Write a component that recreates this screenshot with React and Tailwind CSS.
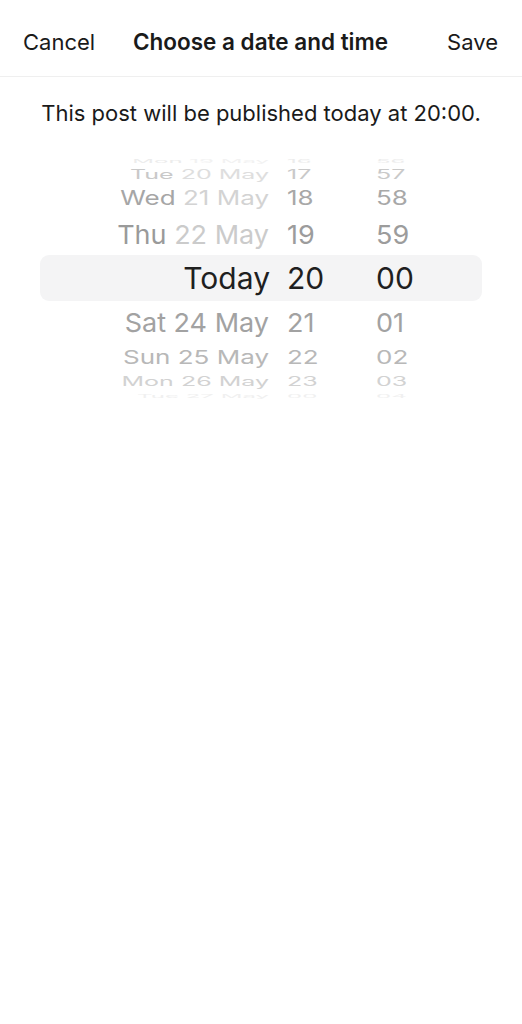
import React from 'react'

const font = { fontFamily: 'Inter, "Noto Sans", sans-serif' }

// wheel rows, top to bottom; the middle one is the chosen value
const rows = [
  { day: 'Mon', date: '19 May', h: '16', m: '56', height: 'h-[11px]', size: 'text-[24px]', scale: 'scale-y-[0.2]', dayColor: 'text-[#ececec]', dateColor: 'text-[#f2f2f2]', numColor: 'text-[#ececec]' },
  { day: 'Tue', date: '20 May', h: '17', m: '57', height: 'h-[17px]', size: 'text-[25px]', scale: 'scale-y-[0.5]', dayColor: 'text-[#c9c9c9]', dateColor: 'text-[#dedede]', numColor: 'text-[#c9c9c9]' },
  { day: 'Wed', date: '21 May', h: '18', m: '58', height: 'h-[30px]', size: 'text-[26px]', scale: 'scale-y-[0.75]', dayColor: 'text-[#a6a6a6]', dateColor: 'text-[#d3d3d3]', numColor: 'text-[#a8a8a8]' },
  { day: 'Thu', date: '22 May', h: '19', m: '59', height: 'h-[42px]', size: 'text-[27px]', scale: 'scale-y-[0.97]', dayColor: 'text-[#9a9a9a]', dateColor: 'text-[#cbcbcb]', numColor: 'text-[#9c9c9c]' },
  { selected: true, day: 'Today', h: '20', m: '00' },
  { day: 'Sat', date: '24 May', h: '21', m: '01', height: 'h-[42px]', size: 'text-[27px]', scale: 'scale-y-[0.97]', dayColor: 'text-[#a2a2a2]', dateColor: 'text-[#a2a2a2]', numColor: 'text-[#a2a2a2]' },
  { day: 'Sun', date: '25 May', h: '22', m: '02', height: 'h-[30px]', size: 'text-[26px]', scale: 'scale-y-[0.72]', dayColor: 'text-[#b8b8b8]', dateColor: 'text-[#b8b8b8]', numColor: 'text-[#b8b8b8]' },
  { day: 'Mon', date: '26 May', h: '23', m: '03', height: 'h-[17px]', size: 'text-[25px]', scale: 'scale-y-[0.5]', dayColor: 'text-[#d2d2d2]', dateColor: 'text-[#d2d2d2]', numColor: 'text-[#d2d2d2]' },
  { day: 'Tue', date: '27 May', h: '00', m: '04', height: 'h-[11px]', size: 'text-[24px]', scale: 'scale-y-[0.2]', dayColor: 'text-[#f0f0f0]', dateColor: 'text-[#f0f0f0]', numColor: 'text-[#f0f0f0]' },
]

function WheelRow({ row }) {
  if (row.selected) {
    return (
      <div className="flex h-[46px] items-center rounded-[9px] bg-[#f4f4f5] text-[30px] leading-none text-[#1f1f1f]">
        <div className="w-[230px] text-right">{row.day}</div>
        <div className="ml-[17px] w-[89px]">{row.h}</div>
        <div>{row.m}</div>
      </div>
    )
  }
  return (
    <div className={`flex items-center overflow-visible leading-none ${row.height} ${row.size}`}>
      <div className={`w-[229px] text-right ${row.scale}`}>
        <span className={row.dayColor}>{row.day}</span>{' '}
        <span className={row.dateColor}>{row.date}</span>
      </div>
      <div className={`ml-[18px] w-[89px] ${row.scale} ${row.numColor}`}>{row.h}</div>
      <div className={`${row.scale} ${row.numColor}`}>{row.m}</div>
    </div>
  )
}

export default function App() {
  return (
    <div className="min-h-[1024px] w-full bg-white" style={font}>
      <div className="grid h-[77px] grid-cols-[1fr_auto_1fr] items-center border-b border-[#efefef] pl-[23px] pr-[24px] pt-[8px] text-[22px] text-[#1a1a1a]">
        <button className="justify-self-start">Cancel</button>
        <h1 className="text-[22.5px] font-semibold">Choose a date and time</h1>
        <button className="justify-self-end">Save</button>
      </div>

      <p className="pt-[22px] text-center text-[22px] leading-[28px] text-[#1a1a1a]">
        This post will be published today at 20:00.
      </p>

      <div className="mt-[28px] flex flex-col px-[40px]">
        {rows.map((row, i) => (
          <WheelRow key={i} row={row} />
        ))}
      </div>
    </div>
  )
}
